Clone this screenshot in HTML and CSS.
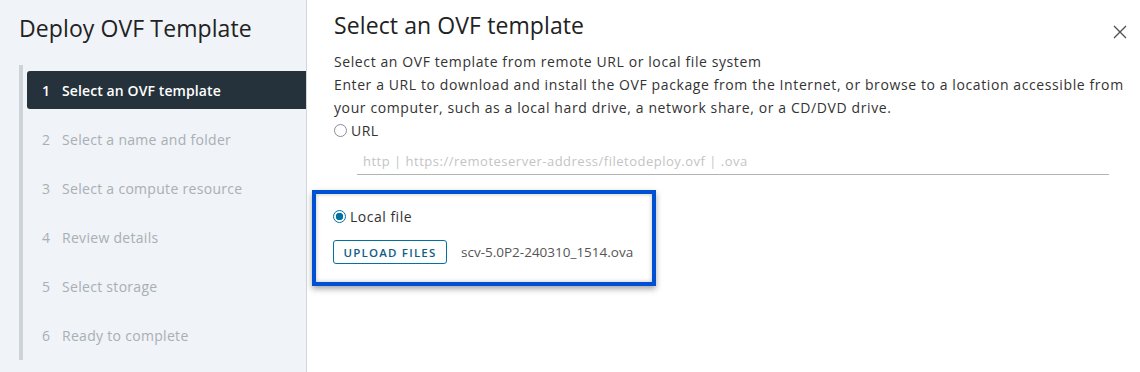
FILE: index.html
```html
<!DOCTYPE html>
<html>
<head>
<meta charset="utf-8">
<link rel="stylesheet" href="styles.css">
</head>
<body>
<div class="wizard">
  <aside class="sidebar">
    <h1 class="wiz-title">Deploy OVF Template</h1>
    <ol class="steps">
      <li class="step active"><span class="num">1</span><span>Select an OVF template</span></li>
      <li class="step"><span class="num">2</span><span>Select a name and folder</span></li>
      <li class="step"><span class="num">3</span><span>Select a compute resource</span></li>
      <li class="step"><span class="num">4</span><span>Review details</span></li>
      <li class="step"><span class="num">5</span><span>Select storage</span></li>
      <li class="step"><span class="num">6</span><span>Ready to complete</span></li>
    </ol>
  </aside>
  <main class="content">
    <div class="header">
      <h2 class="page-title">Select an OVF template</h2>
      <svg class="close" width="14" height="14" viewBox="0 0 14 14"><path d="M1 1 L13 13 M13 1 L1 13" stroke="#4d4d4d" stroke-width="1.3" fill="none"/></svg>
    </div>
    <p class="desc">Select an OVF template from remote URL or local file system</p>
    <p class="desc">Enter a URL to download and install the OVF package from the Internet, or browse to a location accessible from your computer, such as a local hard drive, a network share, or a CD/DVD drive.</p>
    <label class="radio"><span class="circle"></span>URL</label>
    <div class="url-input">http | https://remoteserver-address/filetodeploy.ovf | .ova</div>
    <div class="highlight">
      <label class="radio"><span class="circle checked"></span>Local file</label>
      <div class="upload-row">
        <span class="btn">UPLOAD FILES</span>
        <span class="filename">scv-5.0P2-240310_1514.ova</span>
      </div>
    </div>
  </main>
</div>
</body>
</html>
```
FILE: styles.css
```css
* { box-sizing: border-box; }
html, body { margin: 0; padding: 0; background: #fff; }
body { font-family: "Open Sans", "Liberation Sans", sans-serif; color: #333; width: 1140px; height: 372px; overflow: hidden; }
.wizard { display: flex; height: 372px; }
.sidebar { width: 307px; flex: none; background: #f0f3f7; border-right: 1px solid #d3d6d9; padding: 12px 0 0 19px; }
.wiz-title { margin: 0; font-size: 23px; font-weight: 400; color: #222; line-height: 32px; letter-spacing: 0.1px; }
.steps { list-style: none; margin: 21px 0 0 0; padding: 6px 0 4px 4px; border-left: 4px solid #ccd4d9; height: 295px; }
.step { display: flex; align-items: center; height: 38px; margin-bottom: 11px; padding-left: 15px; font-size: 14px; letter-spacing: 0.3px; color: #a9afb4; }
.step .num { width: 20px; flex: none; }
.step.active { background: #25323c; color: #fff; font-weight: 600; letter-spacing: 0.1px; border-radius: 3px 0 0 3px; }
.content { flex: 1; padding: 10px 0 0 27px; position: relative; }
.header { display: flex; justify-content: space-between; align-items: center; height: 30px; padding-right: 13px; }
.page-title { margin: 0; font-size: 23px; font-weight: 400; color: #222; letter-spacing: 0.1px; }
.close { margin-top: 14px; }
.desc { margin: 0; font-size: 14px; letter-spacing: 0.6px; line-height: 23px; max-width: 795px; }
.header + .desc { margin-top: 10px; }
.radio { display: flex; align-items: center; gap: 4px; font-size: 14px; letter-spacing: 0.5px; line-height: 23px; }
.circle { width: 13px; height: 13px; border: 1.5px solid #8c8c99; border-radius: 50%; display: inline-block; }
.circle.checked { border: 1.5px solid #0072a3; background: radial-gradient(circle, #0072a3 0 3.5px, #fff 4px); }
.url-input { margin: 6px 31px 0 23px; border-bottom: 1px solid #b3b3b3; font-size: 13px; letter-spacing: 0.5px; color: #c4c4c4; padding: 4px 6px 4px; }
.highlight { margin: 15px 0 0 -22px; width: 344px; height: 96px; border: 4px solid #0050d4; padding: 11px 17px; box-shadow: 0 3px 6px rgba(0,0,0,0.35), inset 0 0 4px rgba(0,0,0,0.25); }
.upload-row { display: flex; align-items: center; margin-top: 12px; gap: 14px; }
.btn { flex: none; border: 1px solid #0072a3; border-radius: 3px; color: #0f5e86; font-size: 11.5px; font-weight: 600; letter-spacing: 1.2px; height: 24px; width: 114px; white-space: nowrap; display: inline-flex; align-items: center; justify-content: center; }
.filename { font-size: 13.5px; color: #555; white-space: nowrap; }
```
